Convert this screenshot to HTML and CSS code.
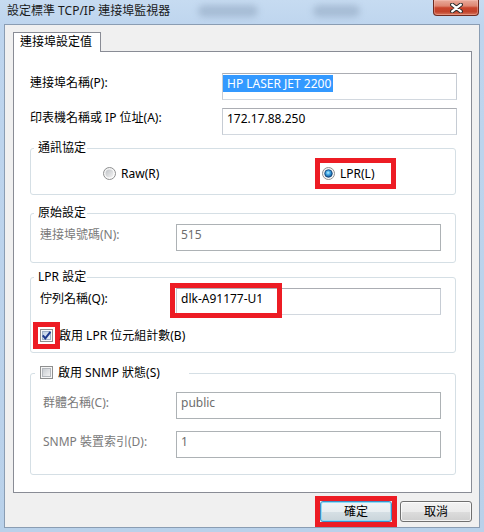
FILE: index.html
```html
<!DOCTYPE html>
<html lang="zh-Hant">
<head>
<meta charset="utf-8">
<title>設定標準 TCP/IP 連接埠監視器</title>
<link rel="stylesheet" href="styles.css">
</head>
<body>
<div class="window">
  <div class="titlebar">
    <span class="title">設定標準 TCP/IP 連接埠監視器</span>
    <span class="haze haze-a"></span>
    <span class="haze haze-b"></span>
    <span class="close" aria-label="關閉">
      <svg width="13" height="10" viewBox="0 0 13 10">
        <path d="M2.2 1.6 L10.8 8.4 M10.8 1.6 L2.2 8.4" stroke="#2b2b2b" stroke-width="4.2" stroke-linecap="round" fill="none"/>
        <path d="M2.2 1.6 L10.8 8.4 M10.8 1.6 L2.2 8.4" stroke="#ffffff" stroke-width="2.3" stroke-linecap="round" fill="none"/>
      </svg>
    </span>
  </div>

  <div class="client">
    <div class="tabstrip"><div class="tab">連接埠設定值</div></div>

    <div class="panel">
      <div class="row">
        <span class="label">連接埠名稱(P):</span>
        <div class="input wide"><span class="selected">HP LASER JET 2200</span></div>
      </div>
      <div class="row row-next">
        <span class="label">印表機名稱或 IP 位址(A):</span>
        <div class="input wide">172.17.88.250</div>
      </div>

      <div class="group g-protocol">
        <div class="legend">通訊協定</div>
        <div class="radios">
          <span class="radio-item raw">
            <svg class="radio" width="13" height="13" viewBox="0 0 13 13">
              <defs>
                <linearGradient id="radioOuter" x1="0" y1="0" x2="1" y2="1">
                  <stop offset="0" stop-color="#f0f0f0"/>
                  <stop offset="1" stop-color="#ffffff"/>
                </linearGradient>
                <linearGradient id="radioInner" x1="0" y1="0" x2="1" y2="1">
                  <stop offset="0" stop-color="#bfc2c6"/>
                  <stop offset="1" stop-color="#f4f4f4"/>
                </linearGradient>
                <radialGradient id="radioDot" cx="0.45" cy="0.4" r="0.6">
                  <stop offset="0" stop-color="#b8f0ff"/>
                  <stop offset="0.45" stop-color="#3fa6e6"/>
                  <stop offset="1" stop-color="#0d4c8c"/>
                </radialGradient>
                <linearGradient id="cbOn" x1="0" y1="0" x2="1" y2="1">
                  <stop offset="0" stop-color="#bccde4"/>
                  <stop offset="1" stop-color="#eef4fb"/>
                </linearGradient>
                <linearGradient id="cbOff" x1="0" y1="0" x2="1" y2="1">
                  <stop offset="0" stop-color="#c6cacf"/>
                  <stop offset="1" stop-color="#f5f5f5"/>
                </linearGradient>
              </defs>
              <circle cx="6.5" cy="6.5" r="6" fill="url(#radioOuter)" stroke="#8d8e8f"/>
              <circle cx="6.5" cy="6.5" r="4" fill="url(#radioInner)"/>
            </svg>
            <span>Raw(R)</span>
          </span>
          <span class="radio-item lpr">
            <svg class="radio" width="13" height="13" viewBox="0 0 13 13">
              <circle cx="6.5" cy="6.5" r="6" fill="url(#radioOuter)" stroke="#8d8e8f"/>
              <circle cx="6.5" cy="6.5" r="3.8" fill="url(#radioDot)" stroke="#0f3f72" stroke-width="0.8"/>
            </svg>
            <span>LPR(L)</span>
          </span>
        </div>
      </div>

      <div class="group g-raw">
        <div class="legend">原始設定</div>
        <div class="grow">
          <span class="glabel disabled-text">連接埠號碼(N):</span>
          <div class="input field disabled">515</div>
        </div>
      </div>

      <div class="group g-lpr">
        <div class="legend">LPR 設定</div>
        <div class="grow">
          <span class="glabel">佇列名稱(Q):</span>
          <div class="field-wrap">
            <div class="input field">dlk-A91177-U1</div>
            <span class="annot-box"></span>
          </div>
        </div>
        <div class="check-row">
          <svg class="cb cb-marked" width="13" height="13" viewBox="0 0 13 13">
            <rect x="0.5" y="0.5" width="12" height="12" fill="#f6f8fb" stroke="#8e8f8f"/>
            <rect x="2.5" y="2.5" width="8" height="8" fill="url(#cbOn)" stroke="#9fb0c6"/>
            <path d="M2.8 6.3 L5.3 9.3 L10.4 2.8" fill="none" stroke="#1e3a8e" stroke-width="2"/>
          </svg>
          <span>啟用 LPR 位元組計數(B)</span>
        </div>
      </div>

      <div class="group g-snmp">
        <div class="legend check-legend">
          <svg class="cb" width="13" height="13" viewBox="0 0 13 13">
            <rect x="0.5" y="0.5" width="12" height="12" fill="#f6f6f6" stroke="#8e8f8f"/>
            <rect x="2.5" y="2.5" width="8" height="8" fill="url(#cbOff)" stroke="#b4b8bd"/>
          </svg>
          <span>啟用 SNMP 狀態(S)</span>
        </div>
        <div class="grow snmp-first">
          <span class="glabel wide-pad disabled-text">群體名稱(C):</span>
          <div class="input field disabled">public</div>
        </div>
        <div class="grow snmp-next">
          <span class="glabel wide-pad disabled-text">SNMP 裝置索引(D):</span>
          <div class="input field disabled">1</div>
        </div>
      </div>
    </div>

    <div class="buttons">
      <span class="btn-mark"><button class="btn btn-default" type="button">確定</button></span>
      <button class="btn" type="button">取消</button>
    </div>
  </div>
</div>
</body>
</html>
```

FILE: styles.css
```css
* {
  box-sizing: border-box;
}

html,
body {
  margin: 0;
  padding: 0;
}

body {
  width: 484px;
  height: 532px;
  overflow: hidden;
  font-family: "Noto Sans", "Noto Sans CJK TC", sans-serif;
  font-size: 12px;
  color: #000;
  background: #b9d1ea;
}

.window {
  width: 484px;
  height: 532px;
  display: flex;
  flex-direction: column;
  background: linear-gradient(to bottom, #c6dbf1 0, #bed5ee 26px, #b9d1ea 100%);
}

/* ---------- title bar ---------- */
.titlebar {
  flex: none;
  height: 24px;
  display: flex;
  align-items: flex-start;
}

.title {
  flex: none;
  width: 198px;
  padding: 2px 0 0 7px;
  line-height: 17px;
  white-space: nowrap;
  color: #1a1a1a;
}

.haze {
  flex: none;
  height: 12px;
  margin-top: 5px;
  border-radius: 6px;
  background: rgba(110, 132, 158, 0.32);
  filter: blur(3px);
}

.haze-a {
  width: 60px;
}

.haze-b {
  width: 47px;
  margin-left: 55px;
}

.close {
  flex: none;
  margin-left: auto;
  margin-right: 5px;
  width: 46px;
  height: 16px;
  border: 1px solid #6e2b21;
  border-top: none;
  border-radius: 0 0 4px 4px;
  background: linear-gradient(to bottom, #e9ab9c 0%, #de8672 40%, #c9452d 52%, #c2432b 78%, #d8785f 100%);
  box-shadow: inset 0 0 0 1px rgba(255, 210, 200, 0.35);
  display: flex;
  align-items: center;
  justify-content: center;
}

/* ---------- client area ---------- */
.client {
  flex: none;
  height: 504px;
  margin: 0 4px;
  border: 1px solid #8a9db3;
  background: #f0f0f0;
  padding: 7px 7px 0 8px;
  display: flex;
  flex-direction: column;
}

.tabstrip {
  display: flex;
}

.tab {
  position: relative;
  z-index: 1;
  width: 88px;
  height: 20px;
  margin-bottom: -1px;
  border: 1px solid #898c95;
  border-bottom: none;
  background: #fff;
  padding-left: 6px;
  line-height: 17px;
  white-space: nowrap;
}

.panel {
  height: 442px;
  border: 1px solid #898c95;
  background: #fff;
  padding: 21px 0 0 16px;
  display: flex;
  flex-direction: column;
}

/* ---------- rows ---------- */
.row {
  display: flex;
  align-items: flex-start;
}

.row-next {
  margin-top: 8px;
}

.label {
  width: 192px;
  padding-top: 1px;
  line-height: 17px;
  white-space: nowrap;
}

.input {
  height: 27px;
  border: 1px solid;
  border-color: #abadb3 #c6ccd4 #d2d8df #c6ccd4;
  background: #fff;
  padding: 1px 4px 0;
  line-height: 17px;
  white-space: nowrap;
  overflow: hidden;
}

.input.wide {
  width: 235px;
}

.input.field {
  width: 265px;
}

.input.disabled {
  border-color: #adb2b5;
  color: #6d6d6d;
}

.selected {
  display: inline-block;
  height: 17px;
  margin: -1px 0 0 -4px;
  padding: 0 2px 0 4px;
  background: #3399ff;
  color: #fff;
}

/* ---------- group boxes ---------- */
.group {
  width: 426px;
  border: 1px solid #d5dfe5;
  border-radius: 3px;
  display: flex;
  flex-direction: column;
}

.g-protocol {
  height: 47px;
  margin-top: 13px;
}

.g-raw {
  height: 50px;
  margin-top: 18px;
}

.g-lpr {
  height: 76px;
  margin-top: 14px;
}

.g-snmp {
  height: 102px;
  margin-top: 20px;
}

.legend {
  align-self: flex-start;
  height: 15px;
  margin: -9px 0 0 3px;
  padding: 0 1px 0 4px;
  background: #fff;
  line-height: 15px;
  white-space: nowrap;
}

.check-legend {
  display: flex;
  align-items: center;
  gap: 5px;
  width: 154px;
  margin-left: 4px;
  padding-left: 5px;
}

.radios {
  display: flex;
  align-items: center;
  margin-top: 3px;
  padding-left: 72px;
}

.radio-item {
  display: flex;
  align-items: center;
  gap: 5px;
  line-height: 17px;
}

.radio {
  flex: none;
  display: block;
}

.raw {
  width: 212px;
}

.lpr {
  width: 81px;
  height: 31px;
  border: 5px solid #ed1c24;
  padding-left: 2px;
}

.grow {
  display: flex;
  align-items: flex-start;
  margin-top: 4px;
  padding-left: 9px;
}

.glabel {
  width: 136px;
  padding-top: 2px;
  line-height: 17px;
  white-space: nowrap;
}

.glabel.wide-pad {
  width: 133px;
  padding-left: 3px;
  box-sizing: content-box;
}

.disabled-text {
  color: #7a7a7a;
}

.snmp-first {
  margin-top: 12px;
}

.snmp-next {
  margin-top: 12px;
}

.field-wrap {
  position: relative;
}

.annot-box {
  position: absolute;
  left: -6px;
  top: -5px;
  width: 112px;
  height: 35px;
  border: 5px solid #ed1c24;
}

.check-row {
  display: flex;
  align-items: center;
  gap: 6px;
  height: 15px;
  margin-top: 13px;
  padding-left: 9px;
  line-height: 15px;
  white-space: nowrap;
}

.cb {
  flex: none;
  display: block;
}

.cb-marked {
  outline: 5px solid #ed1c24;
  outline-offset: 2px;
}

/* ---------- buttons ---------- */
.buttons {
  display: flex;
  justify-content: flex-end;
  align-items: flex-start;
  gap: 8px;
  margin-top: 8px;
}

.btn-mark {
  display: flex;
  outline: 5px solid #ed1c24;
  outline-offset: 0;
}

.btn {
  display: block;
  width: 72px;
  height: 21px;
  padding: 0;
  border: 1px solid #707070;
  border-radius: 3px;
  background: linear-gradient(to bottom, #f2f2f2 0%, #ebebeb 50%, #dddddd 51%, #cfcfcf 100%);
  box-shadow: inset 0 0 0 1px rgba(255, 255, 255, 0.75);
  font-family: "Noto Sans", "Noto Sans CJK TC", sans-serif;
  font-size: 12px;
  line-height: 17px;
  color: #000;
}

.btn-default {
  border-color: #3c8fc8;
  box-shadow: inset 0 0 0 1px #8fdcf6;
  background: linear-gradient(to bottom, #f0f4f6 0%, #e8eef1 50%, #d6e0e5 51%, #c9d4da 100%);
}
```
